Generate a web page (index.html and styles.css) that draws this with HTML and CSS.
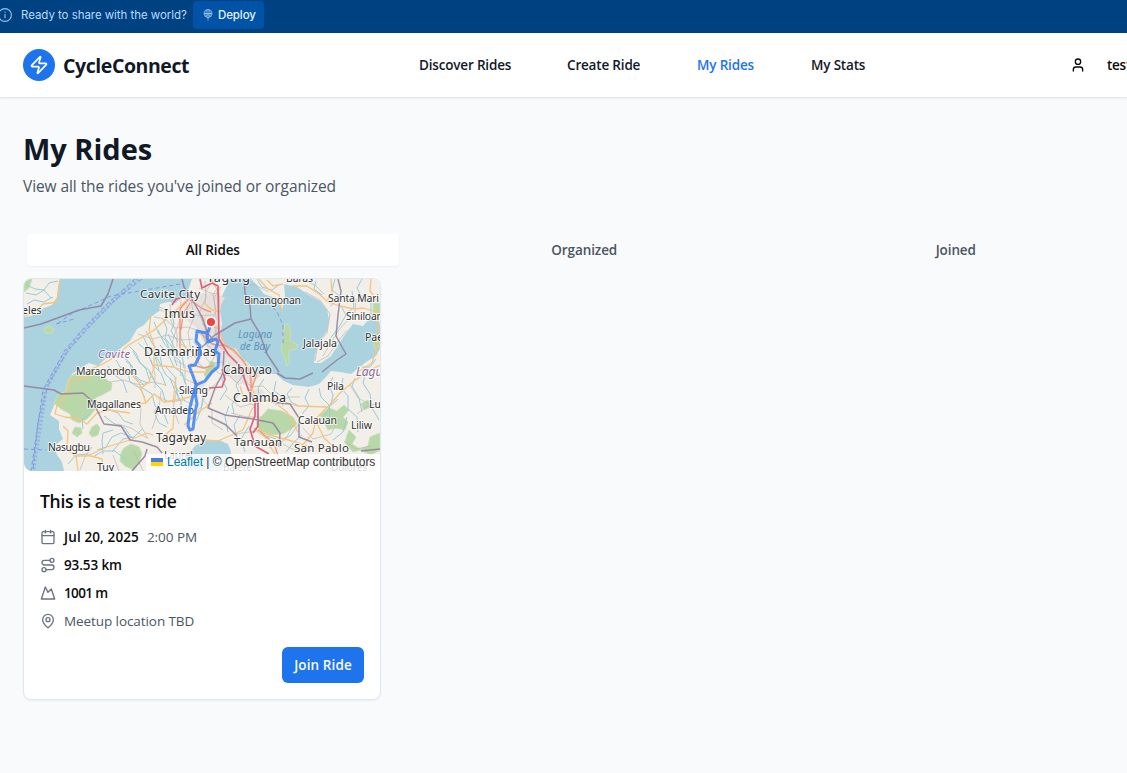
FILE: index.html
```html
<!DOCTYPE html>
<html lang="en">
<head>
<meta charset="utf-8">
<title>CycleConnect – My Rides</title>
<link rel="stylesheet" href="styles.css">
</head>
<body>
<div class="banner">
  <svg class="banner-info" viewBox="0 0 14 14"><circle cx="7" cy="7" r="6.4"/><path d="M7 6v4.2M7 3.6v1.2"/></svg>
  <span class="banner-text">Ready to share with the world?</span>
  <button class="deploy">
    <svg class="deploy-icon" viewBox="0 0 10 12"><circle cx="5" cy="4.5" r="4"/><path d="M1 4.5h8M5 .5v11M3.4 8C2.6 6 2.6 3 4 .8M6.6 8C7.4 6 7.4 3 6 .8M3.3 7L5 5.3 6.7 7"/></svg>
    <span>Deploy</span>
  </button>
</div>
<header class="header">
  <a class="brand">
    <span class="logo"><svg class="icon" viewBox="0 0 24 24"><path d="M4 14a1 1 0 0 1-.78-1.63l9.9-10.2a.5.5 0 0 1 .86.46l-1.92 6.02A1 1 0 0 0 13 10h7a1 1 0 0 1 .78 1.63l-9.9 10.2a.5.5 0 0 1-.86-.46l1.92-6.02A1 1 0 0 0 11 14z"/></svg></span>
    <span class="brand-name">CycleConnect</span>
  </a>
  <nav class="nav">
    <a>Discover Rides</a><a>Create Ride</a><a class="active">My Rides</a><a>My Stats</a>
  </nav>
  <div class="user">
    <svg class="icon" viewBox="0 0 24 24"><path d="M19 21v-2a4 4 0 0 0-4-4H9a4 4 0 0 0-4 4v2"/><circle cx="12" cy="7" r="4"/></svg>
    <span>test</span>
  </div>
</header>
<main class="main">
  <h1 class="title">My Rides</h1>
  <p class="subtitle">View all the rides you've joined or organized</p>
  <div class="tabs">
    <button class="tab selected">All Rides</button><button class="tab">Organized</button><button class="tab">Joined</button>
  </div>
  <article class="card">
    <div class="map">
      <svg class="map-art" viewBox="24 279 356 192">
        <rect class="land" x="24" y="279" width="356" height="192"/>
        <!-- Manila Bay -->
        <path class="water" d="M24 279H192L188 290 190 297 186 300 181 297 176 303 168 302 160 304 159 311 151 317 144 325 137 329 130 341 122 347 115 354 104 360 98 366 89 363 80 368 72 374 70 382 66 392 58 397 53 408 50 415 59 421 59 429 63 439 54 446 57 455 62 462 64 471H24Z"/>
        <path class="land" d="M24 279H60L58 287 57 297 52 305 44 308 36 313 31 316 24 317Z"/>
        <path class="green" d="M24 279h8l-3 9-5 4zM45 328l5-2 4 3-2 4-5 1-3-3z"/>
        <!-- Laguna de Bay -->
        <path class="water" d="M230 279H251L257 285 264 294 278 299 282 309 284 321 282 310 285 296 284 284 297 287 307 294 320 301 327 310 329 319 327 331 319 342 315 355 314 363 321 363 331 356 340 342 346 333 353 324 363 326 370 318 378 317 380 326V348L376 356 366 362 351 374 340 372 331 371 325 378 319 384 309 387 293 385 284 381 276 374 263 374 253 370 244 361 236 349 224 345 219 338 222 324 220 311 222 296Z"/>
        <path class="green" d="M285 324l4 1 2 8-1 8 8 4-2 4-6 1-2 7 2 6-3 3-2-7-4-10 2-13z"/>
        <!-- Taal Lake -->
        <path class="water" d="M195 446l9-5 15-1 9 4 3 8-3 19h-42l-2-12z"/>
        <!-- Forests -->
        <path class="green" d="M70 377l10-6 14 1 8 5 10 6-1 7-9 5-7 3 4 6-5 7-7 8-8 4-7-3-2-6-9-5-7-6 4-8 8-4 1-7zM75 427l6 1 1 5-5 4-5-4zM92 427l5-3 3 4-2 7-6 2-3-4zM124 448l7-4 8 3 3 7-3 8-5 8-9-4-5-5 1-8zM268 409l14 2 11 6 4 7-6 5-8 5-13 1-11-5-3-7 5-6zM320 415l9-7 8 3 7-6 5 5-6 7 5 5-3 8-10-2-7 2zM349 430l7 7-4 7 8 5 8-3 2-9 10-4v17l-9 5-11-5-7 2-8-9 2-8zM373 303h7v12l-7-2zM361 404l7-4 3 7-7 3zM372 340l8-3v9l-5 3zM211 361l5 3-2 7-8 7-2-4z"/>
        <path class="builtup" d="M184 302l17-9 16 1 8 4-5 8 1 34 7 9 19 13 14 13-11 11-14-3-14-14-8-14-9-10-8-17-12-9zM195 380l10 1-1 10-7 3zM250 390l12-1 5 8-10 9-8-8z"/>
        <!-- Rivers -->
        <g class="river">
          <path d="M26 293l10 2 8-5 5-7 9-2M25 284l10 5 9 1 7 8M27 304l7-4 10 2 9-5"/>
          <path d="M146 331l6 12 8 11 2 13M154 322l5 12 7 7 5 12 9 8 1 15M163 319l4 10-2 9 7 9 8 11M172 313l2 11-3 7 7 11M180 326l1 13 5 9 2 11M129 346l7 7 4 10 9 7 5 9M121 355l9 8 2 9 8 8 8 3M138 343l9 8 5 13 9 9 5 13M116 360l4 7 8 5 2 10 10 6 5 10M108 366l5 8 10 7 4 12M151 351l5 5 10 19 9 8 4 18M160 345l8 9 6 13 8 6 4 11M165 366l10 11 1 10 9 14M141 387l11 7 3 12 9 8 4 10"/>
          <path d="M103 404l7 6 8 3 6 8 9 3M104 416l9 7 12 5 6 9M113 430l-10 3-1 8 1 13M134 438l-13-5-9 4-6 10-9 3M142 429l-8 8-11 2-11 13M92 447l-5 7-11 1-8 9M158 405l-4 8 5 10 8 4M90 414l-8 6 1 9M93 457l10-6 12 0 11 9"/>
          <path d="M194 342l5 7-1 14 9 7M203 336l4 9 9 7 2 10M230 369l-8 11 5 9-7 11M243 375l-7 10 3 8-7 11 2 10M264 379l-6 9 2 11-8 10M276 381l-2 10 7 5 2 10M292 388l-5 6 4 8 8 4M309 389l-4 9 4 8-7 8M319 388l2 9 8 8 1 15M333 377l-4 8 4 10-2 9M343 378l-2 10 7 8 0 13 9 8 1 15M355 378l-3 8 7 12 3 14M366 371l-3 12 7 11 2 14 7 12M338 399l-9 8-6 12M347 417l-4 15-10 8M299 424l-9 12-11 4-12-4M302 435l-8 7-8 10M229 406l-4 11 3 15M240 415l-6 10 3 14M249 426l-8 13 4 13"/>
          <path d="M257 279l5 8 10 3 7-5M316 281l-2 8 8 6M335 279l-3 11 9 7M362 279l-5 9 6 11 8 4 0 14M352 291l2 16-9 8M341 306l5 9-7 12-10 13M376 359l-6 8-8 0"/>
          <path d="M133 351l5 9 8 9 4 13M143 336l5 11 7 9 4 14M158 330l6 13 9 11 4 12M168 334l6 13 8 8 2 13M126 361l6 5 4 12 9 8M149 372l7 12 6 6 4 13M170 378l5 13 6 10 0 12M182 372l3 11 5 8M203 396l-2 14-5 11"/>
        </g>
        <!-- Minor roads -->
        <g class="minor">
          <path d="M159 307l14 5 14-2 12 6 14-1M154 317l11 2 10 9 13-1 17 6M138 334l15 5 14-4 14 5 12-1M170 304l1 17 6 12 0 14M181 300l-1 20-7 19-2 16M191 300l3 17-6 15 3 20M205 281l1 17-7 15 6 15 1 15M213 281l-7 10-1 13M219 287l-6 7 3 17-5 11M199 288l14 6 6-2M189 357l14-3 7 9 14-1M174 360l11 5 0 14 11 5M151 360l4 14 0 14M110 382l13-2 17 5 13-3 13 3M104 371l14 4 11-1M202 324l15 4 0 10M199 333l14 11 14 7M217 352l-6 11 7 10 12 3 9 9M230 363l-5 12-14 13-10 9M246 367l-2 12 7 8 12-1 9 9M206 390l-4 16-10 12M157 396l12 6 14-2 13 6M118 424l13 4 16 10M141 407l-1 17 8 15M161 391l-2 18-7 20M177 389l-4 19 6 16M204 401l8 9 0 13 11 7M225 395l15 12 11-3M231 413l16 4 15 0M236 434l20-3 13 9M269 448l16-8 9-16M275 405l14-8 11 0M303 428l10 11 18-5 8-14M344 441l12 8 15-3M357 414l10-8 13-3M350 385l8 13 11 6M306 447l-12 3-11-6M86 454l-6 16M113 455l6 16M134 451l9 20M246 284l9 1 14 7M302 280l13 5 9 9M371 313l-13 6M340 299l-10 7M356 299l-1 13-17 19-15 25"/>
        </g>
        <path class="shore" d="M158 310l6 1M177 299l7-3 7 5M221 287l-7 11 2 20-1 16 8 11M315 361l3-18 9-10 3-19-10-14-15-8M317 362l11-6 11-16 8-10"/>
        <!-- Secondary and trunk roads -->
        <g class="road">
          <path d="M60 279l-3 23-14 2-9 9-10 3M81 373l20-8 17-10 9-9 26-15 20-18 12-11M70 379l19-1 5-7M70 379l-3 14-5 7-5 5-2 9 10 3 14 2 8 5 10-11 12-3 21 3M63 426l5 5-1 18 8 7 12 0 20-9 23-7 17-7 6 2M76 455l2 16M87 455l15 4 2 12M124 405l22-2 8-9 10 8 17-3 14-3M146 403l-7-20-12-14-14 0M151 315l-2 15 5 15 0 23-5 14-9 7M154 365l19 2 16 5 20 0M181 344l10 7 8 11M174 411l-1 17-13 12M184 425l16-14 12-8M171 434l19 5 28 2 25-11 9-21M176 377l-3 26M211 279l8 14 0 14M204 303l8 7 8 2M202 316l6 9 12 2M217 327l8 18 15 12 9 12 3 19 5 15M259 279l9 10 11 6 3 17M292 286l15 0 12 8 9 8 12 4 14 3 9-1 17 5M331 279l1 15-5 7M371 279l-1 12 7 9M283 284l-10 2-6-6M376 314l2 14-1 20-5 15-14 9M380 365l-11 6-15 10-14 12-12 14-31-1-21-7-18 3M327 407l-11 12-3 14-11 13 9 5M316 421l8 17 10 9M278 405l9 7 11 20M276 456l-6-10-9-17M255 406l-11-7-4-13M253 428l13 6 26 7 19 6"/>
        </g>
        <g class="trunk"><path d="M190 297l-10 12 0 45M190 303l-7 12-2 15M190 300l13 9 8 3M201 333l11 11 12 2M258 430l16 13 4 13M257 373l-5 15M190 364l13 4 9-2M222 344l12 6 10 12 7 13 0 18 4 9"/></g>
        <path class="motorway" d="M172 305l4-6 12-2M200 279l2 9 10-5 6 3 1 53 9 15 12 12 8 23 7 13v14l-5 13 5 17 14 8M209 388l13-1 3-8-3-10M258 402v24l-5 7M195 380l2 6"/>
        <!-- Administrative limits -->
        <g class="limit"><path d="M113 279l-5 15-7 12-22 4-16 6-22 8-21 5M24 386l30 4 7 4 22-1 9 8 6 11 6 12 17 2 9 14 12 2 15 5 5 6M182 279l2 8 8 12 10 18 6 17 5 5M244 279l1 14 5 13 1 13-16 4-20 12-14 13M251 319l8 13 8 22 12 18M338 279l3 12-3 24-2 21 6 11 4 7-9 6-15 12M277 373l8 5 15 1 13-6M224 351l-1 22-8 15-7 20 17 7 28 4 20 4 7 10-1 14M208 416l18 9 11 11M271 402l19 2 9 14 0 19 13 5M361 451l19-2M147 449l-2 7-13 15"/></g>
        <!-- Ferry lines -->
        <g class="ferry"><path d="M142 279l-26 20-24 25-24 26-20 35-10 36-5 50M135 279l-27 24-24 25-19 22-22 40-12 81M180 284l-69 12-40 18-14 10M56 324l18-5M24 449l22 1M268 302l9 10 6 13v19"/></g>
        <path class="ferry-band" d="M138 279l-26 23-25 25-21 25-20 36-13 83"/>
        <g class="label">
          <text x="140" y="298" font-size="11.5" textLength="60">Cavite City</text>
          <text x="164" y="318" font-size="12.5" textLength="31">Imus</text>
          <text x="144" y="356" font-size="12.5" textLength="72">Dasmariñas</text>
          <text x="207" y="282" font-size="12.5" textLength="43">Taguig</text>
          <text x="286" y="282" font-size="10.5" textLength="27">Baras</text>
          <text x="244" y="304" font-size="10.5" textLength="57">Binangonan</text>
          <text x="328" y="302" font-size="10.5" textLength="51">Santa Mari</text>
          <text x="346" y="320" font-size="10.5" textLength="37">Siniloan</text>
          <text x="365" y="341" font-size="10.5">Paete</text>
          <text x="303" y="347" font-size="10.5" textLength="34">Jalajala</text>
          <text x="22" y="314" font-size="10.5">eles</text>
          <text x="76" y="375" font-size="10.5" textLength="61">Maragondon</text>
          <text x="87" y="408" font-size="10.5" textLength="54">Magallanes</text>
          <text x="179" y="394" font-size="10.5" textLength="29">Silang</text>
          <text x="155" y="414" font-size="10.5" textLength="39">Amadeo</text>
          <text x="156" y="442" font-size="12" textLength="50">Tagaytay</text>
          <text x="48" y="451" font-size="10.5" textLength="42">Nasugbu</text>
          <text x="97" y="471" font-size="10.5">Tuy</text>
          <text x="164" y="459" font-size="10.5" textLength="29">Laurel</text>
          <text x="223" y="374" font-size="11.8" textLength="49">Cabuyao</text>
          <text x="233" y="402" font-size="12.5" textLength="53">Calamba</text>
          <text x="327" y="390" font-size="10.5" textLength="17">Pila</text>
          <text x="298" y="424" font-size="10.5" textLength="39">Calauan</text>
          <text x="351" y="429" font-size="10.5" textLength="21">Liliw</text>
          <text x="369" y="408" font-size="10.5">Luisiana</text>
          <text x="234" y="446" font-size="11.5" textLength="48">Tanauan</text>
          <text x="294" y="452" font-size="11.5" textLength="55">San Pablo</text>
          <text x="223" y="471" font-size="10" textLength="29">Balete</text>
          <text x="331" y="471" font-size="10" textLength="36">Dolores</text>
        </g>
        <g class="region"><text x="98" y="358" font-size="11" textLength="32">Cavite</text><text x="356" y="376" font-size="12">Laguna</text></g>
        <g class="lake-name"><text x="238" y="338" font-size="10" textLength="34">Laguna</text><text x="240" y="350" font-size="10" textLength="30">de Bay</text></g>
        <!-- Recorded route -->
        <path class="route" d="M210 324L209 330 206 333 197 331 196 341 200 346 199 357 195 365 189 366 193 376 196 385 194 392 190 407 188 426 190 430 193 429 195 412 197 404 195 392 196 385 205 381 212 372 218 367 219 354 215 351 218 342 216 339 208 342 207 334 209 330"/>
        <circle class="pin" cx="211" cy="322" r="4.8"/>
      </svg>
      <div class="attribution"><svg class="flag" viewBox="0 0 12 8"><path fill="#4c7be1" d="M0 0h12v4H0z"/><path fill="#ffd500" d="M0 4h12v4H0z"/></svg><a>Leaflet</a> | © OpenStreetMap contributors</div>
    </div>
    <div class="card-body">
      <h2 class="ride-name">This is a test ride</h2>
      <ul class="facts">
        <li><svg class="icon" viewBox="0 0 24 24"><path d="M8 2v4M16 2v4M3 10h18"/><rect width="18" height="18" x="3" y="4" rx="2"/></svg><strong class="date">Jul 20, 2025</strong><span class="time">2:00 PM</span></li>
        <li><svg class="icon" viewBox="0 0 24 24"><circle cx="6" cy="19" r="3"/><path d="M9 19h8.5a3.5 3.5 0 0 0 0-7h-11a3.5 3.5 0 0 1 0-7H15"/><circle cx="18" cy="5" r="3"/></svg><strong>93.53 km</strong></li>
        <li><svg class="icon" viewBox="0 0 24 24"><path d="m8 3 4 8 5-5 5 15H2L8 3z"/></svg><strong class="climb">1001 m</strong></li>
        <li><svg class="icon" viewBox="0 0 24 24"><path d="M20 10c0 4.993-5.539 10.193-7.399 11.799a1 1 0 0 1-1.202 0C9.539 20.193 4 14.993 4 10a8 8 0 0 1 16 0"/><circle cx="12" cy="10" r="3"/></svg><span class="meetup">Meetup location TBD</span></li>
      </ul>
      <button class="join">Join Ride</button>
    </div>
  </article>
</main>
</body>
</html>
```
FILE: styles.css
```css
* { box-sizing: border-box; }
body { margin: 0; height: 773px; overflow: hidden; background: #f9fafc; color: #0a0a0a; font-family: "Open Sans", "Noto Sans", sans-serif; font-size: 14px; }
button { border: 0; padding: 0; background: none; font-family: inherit; }
h1, h2, p, ul { margin: 0; padding: 0; }
.icon { width: 16px; height: 16px; flex: none; fill: none; stroke: currentColor; stroke-width: 2; stroke-linecap: round; stroke-linejoin: round; }

.banner { display: flex; align-items: center; height: 33px; padding-bottom: 3px; background: #004182; color: #b5dcff; font-family: Inter, sans-serif; font-size: 11.5px; }
.banner-info { width: 14px; height: 14px; margin-left: -2px; fill: none; stroke: #8fc5f5; stroke-width: 1.1; }
.banner-text { margin-left: 9px; width: 172px; white-space: nowrap; letter-spacing: -.05px; }
.deploy { display: flex; align-items: center; gap: 5px; width: 71px; height: 28px; padding-left: 10px; border-radius: 4px; background: #0053a6; color: #e4f2ff; font-size: 11.5px; font-weight: 500; letter-spacing: -.1px; }
.deploy-icon { width: 10px; height: 12px; fill: none; stroke: #cfe7ff; stroke-width: .6; }

.header { display: flex; align-items: center; height: 65px; padding-left: 23px; background: #fff; border-bottom: 1px solid #e5e7eb; box-shadow: 0 1px 2px rgba(0,0,0,.05); font-weight: 600; white-space: nowrap; }
.brand { display: flex; flex: none; align-items: center; gap: 8px; width: 396px; }
.logo { display: grid; place-items: center; width: 32px; height: 32px; border-radius: 50%; background: #1d74ec; color: #fff; }
.logo .icon { width: 20px; height: 20px; }
.brand-name { font-size: 19.5px; font-weight: 700; letter-spacing: -.42px; color: #111827; }
.nav { display: flex; flex: none; width: 653px; font-size: 13.5px; letter-spacing: -.18px; color: #111827; }
.nav a:nth-child(1) { width: 148px; }
.nav a:nth-child(2) { width: 130px; }
.nav a:nth-child(3) { width: 114px; }
.nav .active { color: #1d74ec; }
.user { display: flex; flex: none; align-items: center; gap: 21px; font-size: 13.5px; letter-spacing: -.25px; }
.user .icon { margin-left: -2px; }

.main { width: 1169px; padding: 29px 23px 0; }
.title { height: 44px; line-height: 44px; font-size: 29px; font-weight: 700; letter-spacing: 0; color: #111827; }
.subtitle { height: 28px; margin-top: 1px; line-height: 28px; font-size: 15.5px; letter-spacing: -.08px; color: #4b5563; }
.tabs { display: grid; grid-template-columns: repeat(3, 371.5px); height: 45px; margin-top: 34px; padding: 0 4px; }
.tab { height: 32px; border-radius: 4px; font-size: 13.5px; font-weight: 600; letter-spacing: -.1px; color: #4b5563; }
.tab.selected { background: #fff; color: #0a0a0a; box-shadow: 0 1px 2px rgba(0,0,0,.05); }

.card { width: 358px; height: 422px; margin-top: -1px; border: 1px solid #e2e8f0; border-radius: 8px; overflow: hidden; background: #fff; box-shadow: 0 1px 2px rgba(0,0,0,.05); }
.map { position: relative; height: 192px; overflow: hidden; border-radius: 7px 7px 8px 8px; }
.map-art { display: block; width: 356px; height: 192px; }
.land { fill: #f2efe9; }
.water { fill: #aad3df; }
.green { fill: #b9d8a9; stroke: #c9dfb8; stroke-width: 1; }
.builtup { fill: #e6e1de; }
.map-art g, .route, .motorway, .shore, .ferry-band { fill: none; stroke-linejoin: round; }
.river { stroke: #96cbdc; stroke-width: 1; }
.minor { stroke: #bbb8b6; stroke-width: .7; }
.shore { stroke: #bab6b2; stroke-width: .7; }
.road { stroke: #f7c47d; stroke-width: 1.3; }
.trunk { stroke: #f3977c; stroke-width: 1.4; }
.motorway { stroke: #e0607c; stroke-width: 1.7; }
.limit { stroke: #907c9c; stroke-width: 1.5; opacity: .85; }
.ferry { stroke: #7e91dc; stroke-width: .9; stroke-dasharray: 4 3; }
.ferry-band { stroke: #8796e3; stroke-width: 4; stroke-dasharray: 2 2; opacity: .5; }
.route { stroke: #3b82f6; stroke-width: 3; stroke-linecap: round; opacity: .85; }
.pin { fill: #ef4444; stroke: #fff; stroke-width: 1.5; }
.map-art text { stroke: rgba(255,255,255,.75); stroke-width: 2px; paint-order: stroke; font-family: "Noto Sans", sans-serif; }
.label text { fill: #303030; }
.region text { fill: #89679a; font-style: italic; }
.lake-name text { fill: #5c91bd; stroke: none; font-style: italic; }
.attribution { position: absolute; right: 0; bottom: 0; width: 234px; height: 17px; padding: 0 5px; background: rgba(255,255,255,.8); color: #333; font: 12px/17px "Liberation Sans", Arial, sans-serif; letter-spacing: -.01px; text-align: right; white-space: nowrap; }
.attribution a { color: #0078a8; }
.flag { width: 12px; height: 8px; margin-right: 4px; }

.card-body { display: flex; flex-direction: column; height: 228px; padding: 16px 16px; }
.ride-name { height: 28px; line-height: 28px; font-size: 17.5px; font-weight: 600; letter-spacing: -.28px; }
.facts { display: grid; gap: 8px; margin-top: 12px; list-style: none; font-size: 13.5px; line-height: 20px; color: #4b5563; }
.facts li { display: flex; align-items: center; height: 20px; white-space: nowrap; }
.facts .icon { margin-right: 8px; color: #6b7280; }
.facts strong { font-weight: 600; color: #0a0a0a; letter-spacing: -.1px; }
.facts .date { letter-spacing: .13px; }
.facts .climb { letter-spacing: -.65px; }
.facts .time { margin-left: 8px; letter-spacing: -.05px; }
.facts .meetup { letter-spacing: -.08px; }
.join { width: 82px; height: 36px; margin-top: 16px; align-self: flex-end; flex: none; border-radius: 6px; background: #1d74ec; color: #f8fafc; font-size: 13.5px; font-weight: 600; letter-spacing: .1px; }
```
